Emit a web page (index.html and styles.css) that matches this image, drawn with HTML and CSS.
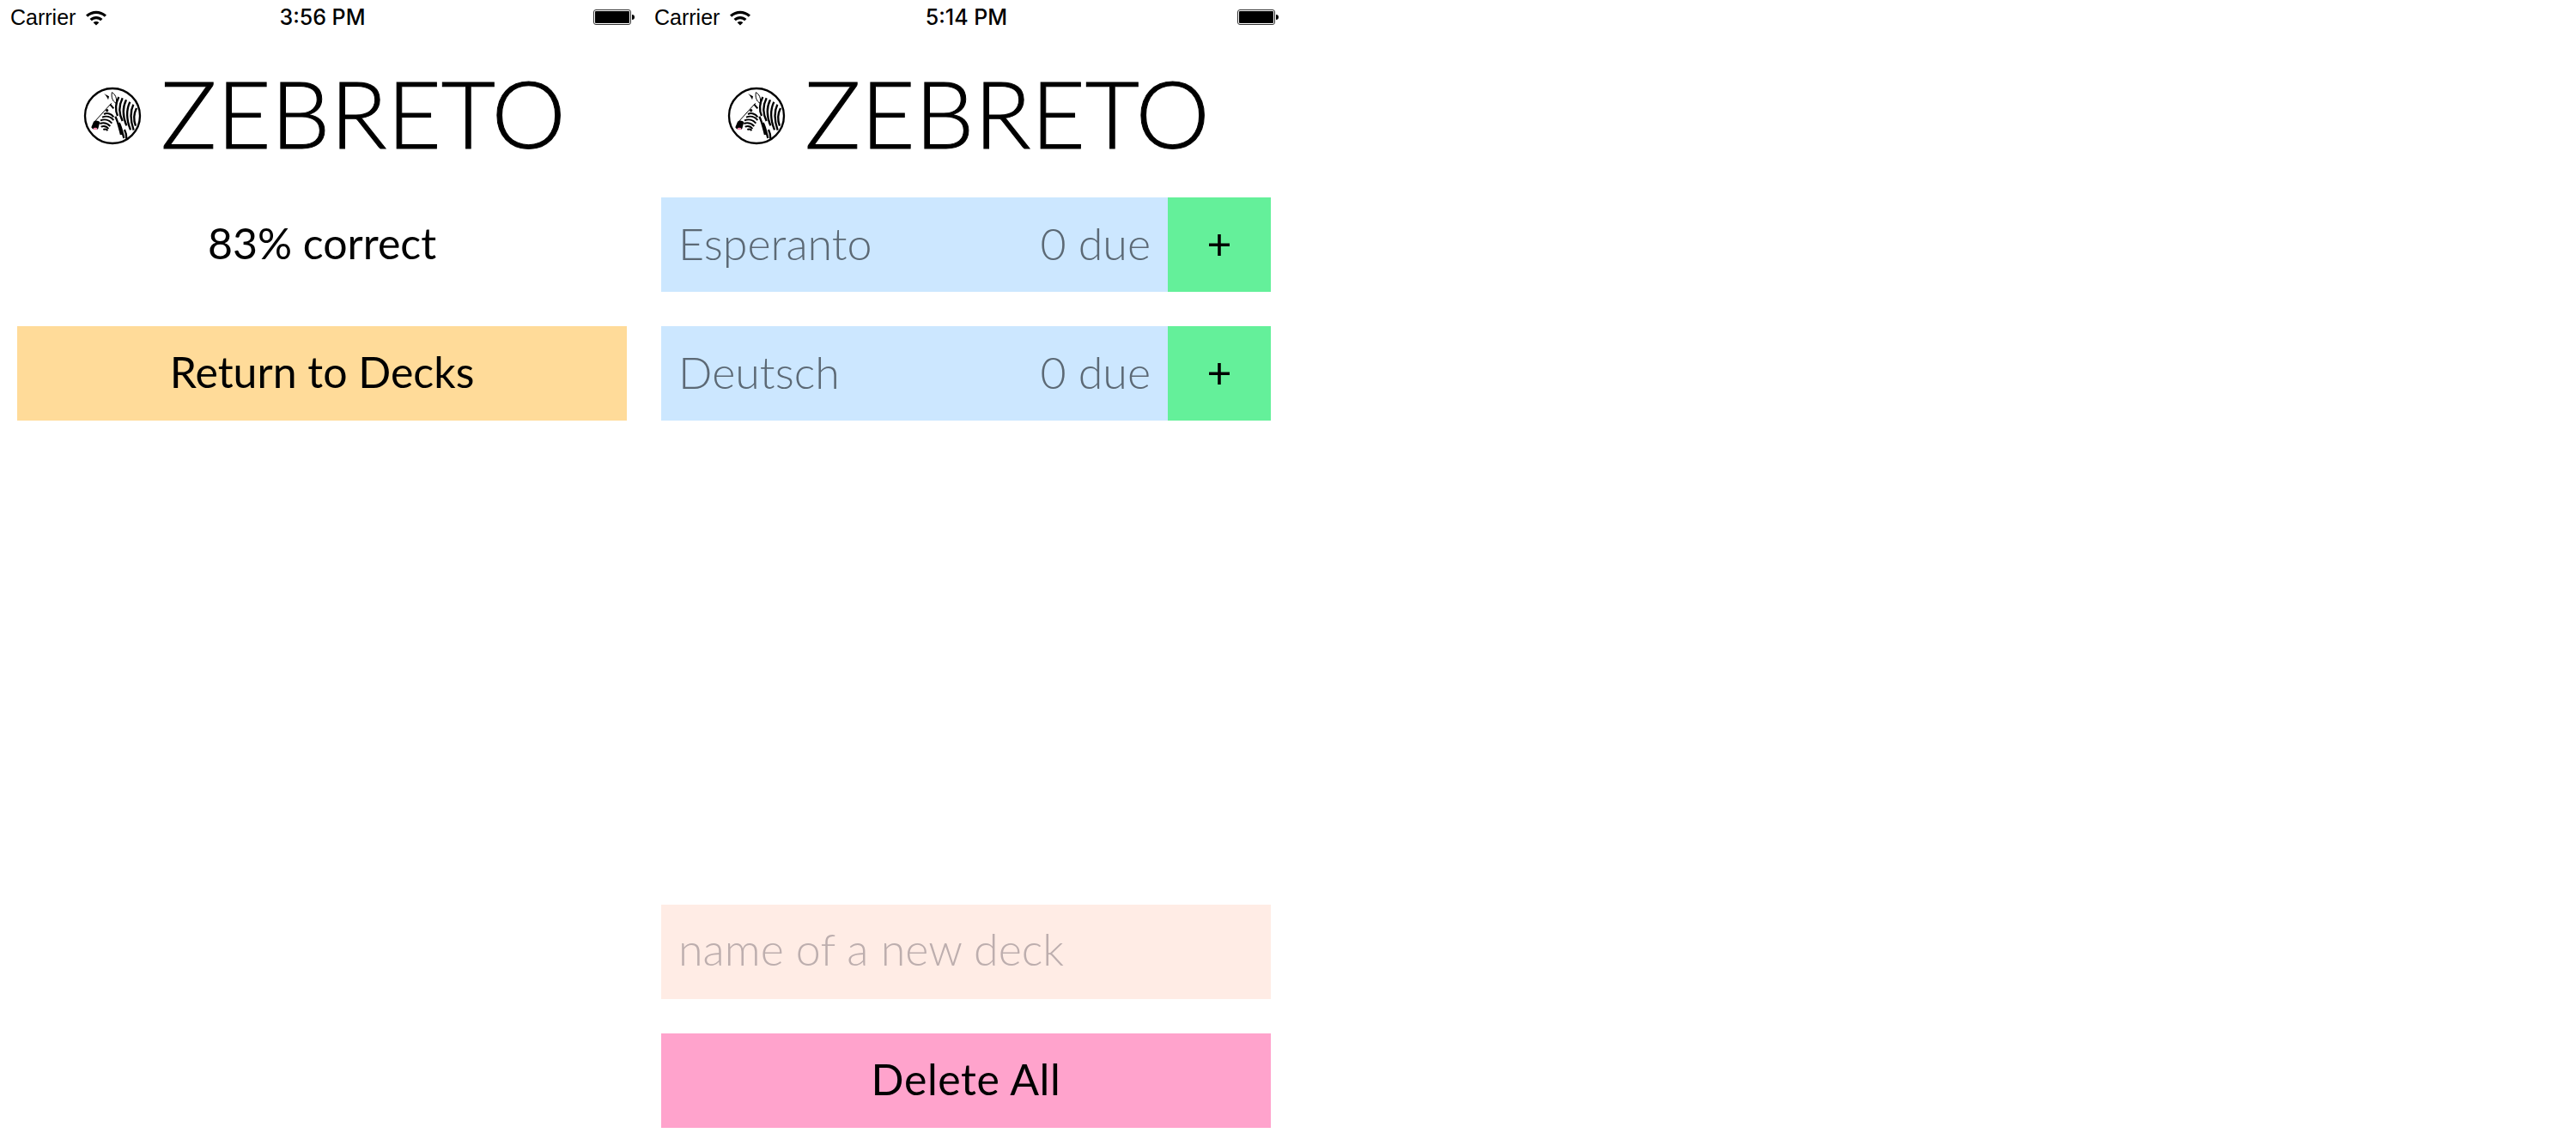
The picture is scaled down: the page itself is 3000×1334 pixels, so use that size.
FILE: index.html
```html
<!DOCTYPE html>
<html lang="en">
<head>
  <meta charset="UTF-8">
  <title>Zebreto</title>
  <link rel="stylesheet" href="styles.css">
</head>
<body>
  <svg class="defs" width="0" height="0">
    <symbol id="zebra" viewBox="0 0 240 240">
      <circle cx="120" cy="120" r="96" fill="#fff" stroke="#000" stroke-width="7"/>
      <path d="M90 42l18 10-3 12c-3-8-8-16-15-22z" fill="#000"/>
      <path d="M118 38c12 6 18 20 15 38-12-6-18-20-15-38z" fill="#fff" stroke="#000" stroke-width="3"/>
      <path d="M116 76L56 142" fill="none" stroke="#000" stroke-width="3"/>
      <path d="M54 140c8-6 16-4 22 2l-6 22c-6 8-20 4-24-4z" fill="#000"/>
      <ellipse cx="60" cy="165" rx="7" ry="4" fill="#f48fb1"/>
      <circle cx="101" cy="101" r="5" fill="#000"/>
      <path d="M112 80l12 14M90 114c12-6 26-2 34 10M84 125c14-6 30-2 40 10M78 136c14-6 30-2 40 10M76 147c14-5 26-1 36 9M80 158c10-4 20-1 26 7M88 168c6-3 12-1 15 4" fill="none" stroke="#000" stroke-width="6"/>
      <path d="M142 54c-11 22-13 46-4 66M155 58c-13 26-13 54 0 80M168 64c-13 26-13 57 1 90M181 71c-13 27-13 60 2 98M193 80c-12 25-11 55 1 90M204 93c-10 20-10 44-3 62M130 122c10 20 14 42 20 64M143 144c9 18 12 36 17 54M162 168c5 10 7 20 7 32" fill="none" stroke="#000" stroke-width="7"/>
    </symbol>
    <symbol id="wifi" viewBox="0 0 26 20">
      <path d="M1 7.500c7-6.500 17-6.500 24 0l-2.200 2.300c-5.700-5-13.900-5-19.600 0zM5.500 12c4.500-4 10.500-4 15 0l-2.300 2.300c-3.200-2.700-7.200-2.700-10.400 0zM9.600 16.200c2-1.700 4.800-1.700 6.800 0L13 19.600z" fill="#000"/>
    </symbol>
  </svg>

  <div class="screens">
    <div class="phone">
      <div class="status-bar">
        <div class="carrier">Carrier <svg class="wifi"><use href="#wifi"/></svg></div>
        <div class="time">3:56 PM</div>
        <div class="battery"><span class="battery-fill"></span></div>
      </div>
      <div class="brand">
        <svg class="zebra"><use href="#zebra"/></svg>
        <h1>ZEBRETO</h1>
      </div>
      <div class="block score">83% correct</div>
      <div class="block return-btn">Return to Decks</div>
    </div>

    <div class="phone">
      <div class="status-bar">
        <div class="carrier">Carrier <svg class="wifi"><use href="#wifi"/></svg></div>
        <div class="time">5:14 PM</div>
        <div class="battery"><span class="battery-fill"></span></div>
      </div>
      <div class="brand">
        <svg class="zebra"><use href="#zebra"/></svg>
        <h1>ZEBRETO</h1>
      </div>
      <div class="deck">
        <div class="deck-name"><span>Esperanto</span><span>0 due</span></div>
        <div class="deck-add">+</div>
      </div>
      <div class="deck">
        <div class="deck-name"><span>Deutsch</span><span>0 due</span></div>
        <div class="deck-add">+</div>
      </div>
      <div class="spacer"></div>
      <div class="block new-deck">name of a new deck</div>
      <div class="block delete-btn">Delete All</div>
    </div>
  </div>
</body>
</html>
```

FILE: styles.css
```css
html, body {
  margin: 0;
  padding: 0;
  height: 100%;
  background-color: #ffffff;
  color: #000;
  font-family: "Lato", "Noto Sans", sans-serif;
  font-weight: 400;
  font-size: 50px;
}
.defs {
  position: absolute;
}
.screens {
  display: flex;
  height: 1334px;
}
.phone {
  width: 750px;
  height: 1334px;
  box-sizing: border-box;
  padding-bottom: 20px;
  display: flex;
  flex-direction: column;
  align-items: center;
}
.status-bar {
  width: 100%;
  height: 40px;
  box-sizing: border-box;
  padding: 0 11px 0 12px;
  display: grid;
  grid-template-columns: 1fr auto 1fr;
  align-items: center;
  font-family: "Liberation Sans", sans-serif;
  font-weight: 400;
  font-size: 24px;
}
.carrier {
  display: flex;
  align-items: center;
  gap: 11px;
  font-size: 25px;
}
.wifi {
  width: 26px;
  height: 20px;
}
.time {
  font-family: "Inter", sans-serif;
  font-weight: 500;
  font-size: 25px;
}
.battery {
  justify-self: end;
  position: relative;
  width: 44px;
  height: 18px;
  box-sizing: border-box;
  border: 1px solid #333;
  border-radius: 3px;
  padding: 1px;
  margin-right: 4px;
}
.battery::after {
  content: "";
  position: absolute;
  right: -5px;
  top: 5px;
  width: 3px;
  height: 6px;
  background: #000;
  border-radius: 0 3px 3px 0;
}
.battery-fill {
  display: block;
  height: 100%;
  background: #000;
  border-radius: 1px;
}
.brand {
  height: 190px;
  padding-bottom: 9px;
  box-sizing: border-box;
  display: flex;
  align-items: center;
  justify-content: center;
  gap: 16px;
}
.brand h1 {
  margin: 0;
  font-weight: 300;
  font-size: 109px;
  line-height: 1;
  -webkit-text-stroke: 1px #000;
}
.zebra {
  width: 80px;
  height: 80px;
  margin-top: 8px;
}
.block {
  width: 710px;
  height: 110px;
  flex: none;
  box-sizing: border-box;
  padding-bottom: 4px;
  margin-bottom: 40px;
  display: flex;
  align-items: center;
  justify-content: center;
}
.return-btn {
  background-color: #ffdb99;
}
.deck {
  width: 710px;
  height: 110px;
  flex: none;
  margin-bottom: 40px;
  display: flex;
}
.deck-name {
  flex: 1;
  padding: 0 20px 4px;
  display: flex;
  align-items: center;
  justify-content: space-between;
  background-color: #cce7ff;
  color: #5c6975;
  font-weight: 300;
  font-size: 52px;
}
.deck-add {
  width: 120px;
  padding-bottom: 4px;
  display: flex;
  align-items: center;
  justify-content: center;
  background-color: #64f09a;
}
.spacer {
  flex: 1;
}
.new-deck {
  justify-content: flex-start;
  padding: 0 20px 8px;
  background-color: #ffece5;
  color: #bdaeae;
  font-weight: 300;
  font-size: 52px;
}
.delete-btn {
  margin-bottom: 0;
  background-color: #ffa3cc;
  letter-spacing: 0.6px;
}
```
